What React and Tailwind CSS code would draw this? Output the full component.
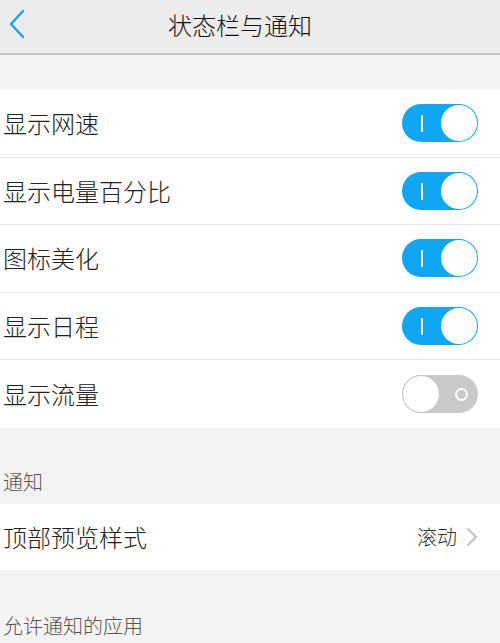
import React, { useState } from 'react';

const font = { fontFamily: '"Noto Sans CJK SC", "Noto Sans", sans-serif' };

function Toggle({ on, onChange }) {
  return (
    <button
      onClick={onChange}
      className={`relative w-[76px] h-[38px] rounded-full flex items-center ${
        on ? 'bg-[#0fa7f3]' : 'bg-[#c9c9c9]'
      }`}
    >
      {on ? (
        <>
          <span className="absolute left-[19px] top-[11px] w-[2px] h-[17px] bg-white rounded-sm" />
          <span className="absolute right-[1px] top-[1px] w-[36px] h-[36px] rounded-full bg-white" />
        </>
      ) : (
        <>
          <span className="absolute left-0 top-0 w-[38px] h-[38px] rounded-full bg-white border border-[#c4c4c4]" />
          <span className="absolute right-[10px] top-[13px] w-[13px] h-[13px] rounded-full border-2 border-white" />
        </>
      )}
    </button>
  );
}

export default function App() {
  const [switches, setSwitches] = useState({
    speed: true,
    battery: true,
    icon: true,
    schedule: true,
    traffic: false,
  });

  const rows = [
    { key: 'speed', label: '显示网速' },
    { key: 'battery', label: '显示电量百分比' },
    { key: 'icon', label: '图标美化' },
    { key: 'schedule', label: '显示日程' },
    { key: 'traffic', label: '显示流量' },
  ];

  return (
    <div className="w-[500px] h-[643px] bg-[#f3f3f3] overflow-hidden font-light" style={font}>
      {/* 顶部栏 */}
      <div className="h-[55px] bg-[#ececec] border-b-2 border-[#c6c6c6] flex items-center relative">
        <svg className="absolute left-[8px] top-[9px]" width="18" height="30" viewBox="0 0 18 30">
          <path d="M15 2 L3 15 L15 28" fill="none" stroke="#12a5f2" strokeWidth="2.4" strokeLinecap="round" strokeLinejoin="round" />
        </svg>
        <div className="w-full text-center pr-[20px] text-[24px] text-[#111] leading-none -mt-[3px]">状态栏与通知</div>
      </div>

      <div className="h-[35px]" />

      {/* 开关列表 */}
      <div className="bg-white">
        {rows.map((row, i) => (
          <div
            key={row.key}
            className={`h-[67.5px] flex items-center justify-between pl-[3px] pr-[22px] ${
              i < rows.length - 1 ? 'border-b border-[#e4e4e4]' : ''
            }`}
          >
            <span className="text-[24px] text-[#222] leading-none">{row.label}</span>
            <Toggle
              on={switches[row.key]}
              onChange={() => setSwitches(prev => ({ ...prev, [row.key]: !prev[row.key] }))}
            />
          </div>
        ))}
      </div>

      {/* 通知 */}
      <div className="h-[76px] flex items-end pl-[3px] pb-[12px]">
        <span className="text-[20px] text-[#555] leading-none">通知</span>
      </div>
      <div className="bg-white h-[66px] flex items-center justify-between pl-[3px] pr-[22px]">
        <span className="text-[24px] text-[#222] leading-none">顶部预览样式</span>
        <div className="flex items-center gap-[9px]">
          <span className="text-[20px] text-[#333] leading-none">滚动</span>
          <svg width="12" height="20" viewBox="0 0 12 20">
            <path d="M2 2 L10 10 L2 18" fill="none" stroke="#c2c2c2" strokeWidth="2" strokeLinecap="round" strokeLinejoin="round" />
          </svg>
        </div>
      </div>

      <div className="h-[67px] flex items-end pl-[3px] pb-[1px]">
        <span className="text-[20px] text-[#555] leading-none">允许通知的应用</span>
      </div>
    </div>
  );
}
